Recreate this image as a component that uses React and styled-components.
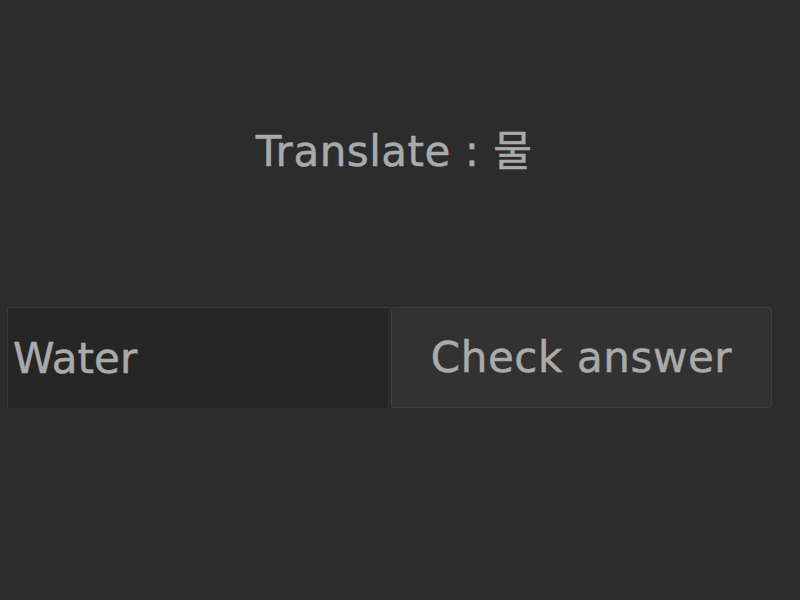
import styled, { createGlobalStyle } from "styled-components";

const Global = createGlobalStyle`
    html, body {
        margin: 0;
        background: #2c2c2c;
        font-family: "DejaVu Sans", "Noto Sans CJK KR", sans-serif;
        color: #aaaaaa;
    }
`;

const Page = styled.div`
    width: 800px;
    height: 600px;
    display: flex;
    flex-direction: column;
`;

const Title = styled.h1`
    margin: 0;
    padding-top: 123px;
    height: 307px;
    box-sizing: border-box;
    text-align: center;
    font-size: 42px;
    font-weight: normal;
    letter-spacing: 0.5px;
    line-height: 58px;
    padding-right: 12px;
    -webkit-text-stroke: 0.5px #aaaaaa;
`;

const Row = styled.form`
    display: flex;
    gap: 2px;
    padding-left: 7px;
`;

const Input = styled.input`
    width: 382px;
    height: 101px;
    box-sizing: border-box;
    background: #262626;
    border: 1px solid #3a3a3a;
    border-right-color: #2e2e2e;
    border-bottom: none;
    color: #aaaaaa;
    font-family: inherit;
    font-size: 42px;
    padding: 0 5px;
    outline: none;
    -webkit-text-stroke: 0.5px #aaaaaa;
`;

const Button = styled.button`
    width: 381px;
    height: 101px;
    box-sizing: border-box;
    background: #323232;
    border: 1px solid #3e3e3e;
    border-radius: 3px;
    color: #aaaaaa;
    font-family: inherit;
    font-size: 42px;
    letter-spacing: 0.6px;
    -webkit-text-stroke: 0.5px #aaaaaa;
`;

export default function App() {
    return (
        <Page>
            <Global />
            <Title>Translate : 물</Title>
            <Row onSubmit={(e) => e.preventDefault()}>
                <Input defaultValue='Water' />
                <Button type='submit'>Check answer</Button>
            </Row>
        </Page>
    );
}
